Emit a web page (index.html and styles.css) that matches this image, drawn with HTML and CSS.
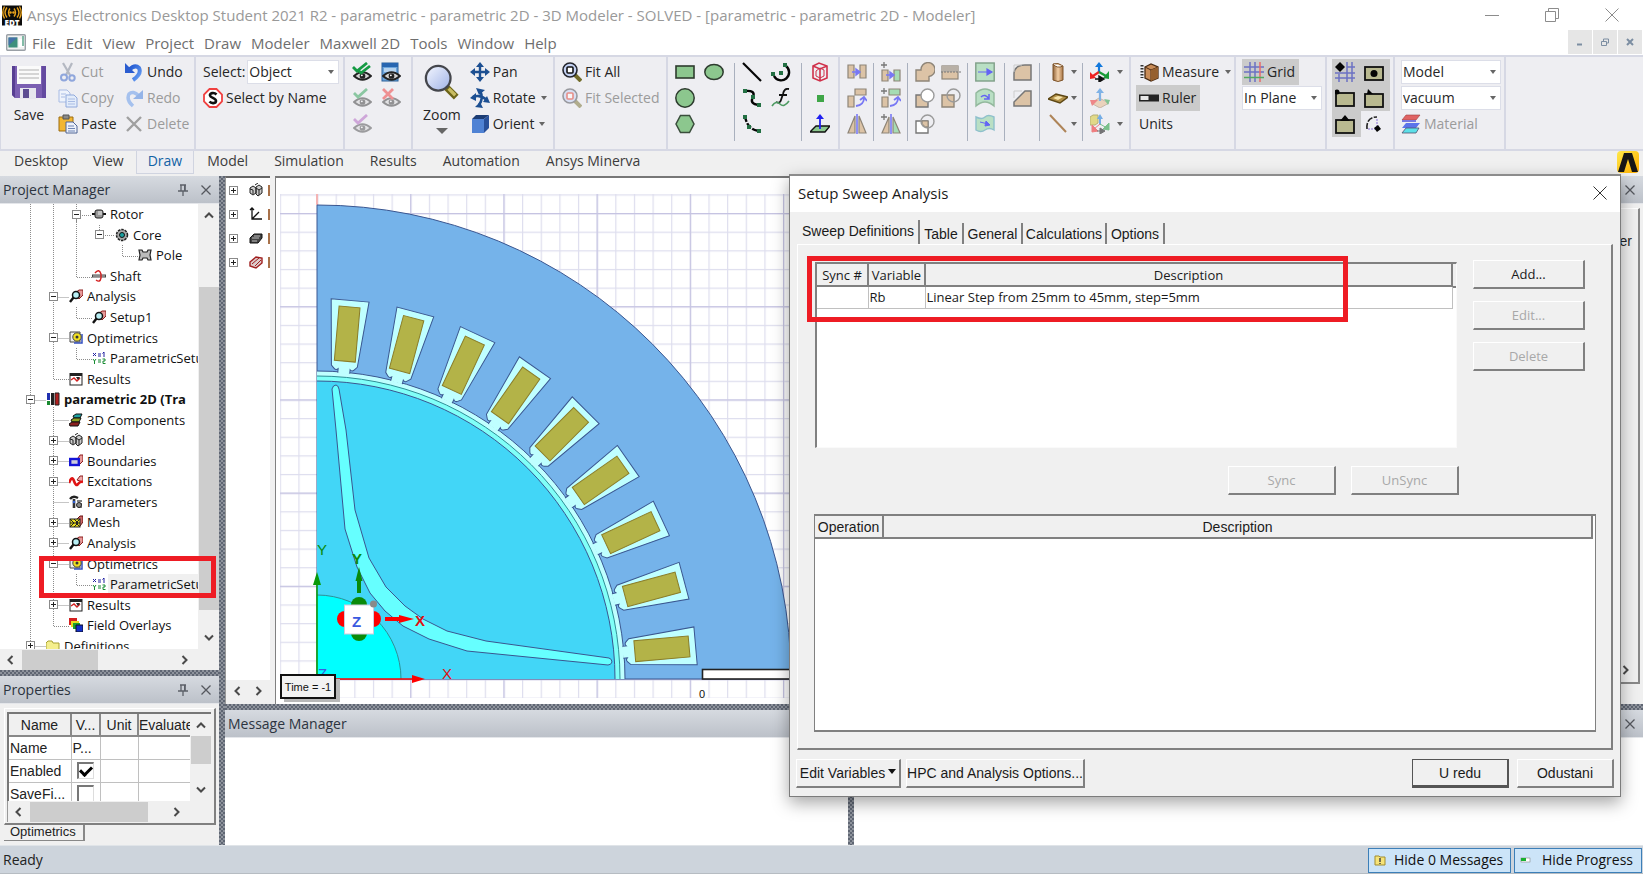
FILE: index.html
```html
<!DOCTYPE html>
<html lang="en">
<head>
<meta charset="utf-8">
<title>Ansys Electronics Desktop Student 2021 R2</title>
<link rel="stylesheet" href="styles.css">
</head>
<body>
<svg class="defs" aria-hidden="true">
  <defs>
    <linearGradient id="lens" x1="0" y1="0" x2="1" y2="1"><stop offset="0" stop-color="#f4f7ff"/><stop offset="1" stop-color="#9fb2e6"/></linearGradient>
    <linearGradient id="blueArrow" x1="0" y1="0" x2="1" y2="1"><stop offset="0" stop-color="#1d55d0"/><stop offset="1" stop-color="#6aa0f4"/></linearGradient>
    <linearGradient id="tube"><stop offset="0" stop-color="#8f6238"/><stop offset=".5" stop-color="#f3cfa6"/><stop offset="1" stop-color="#a87545"/></linearGradient>
    <linearGradient id="gold" x1="0" y1="0" x2="1" y2="1"><stop offset="0" stop-color="#ffe94a"/><stop offset="1" stop-color="#ffae00"/></linearGradient>
    <symbol id="i-app" viewBox="0 0 20 20"><rect width="20" height="20" fill="#0c0c0c"/><g fill="none" stroke="#e8a21c" stroke-width="1.4"><path d="M8 3Q5 7 8 11M5 2Q1 7 5 12M2.500 1Q-1 7 2.500 13M12 3Q15 7 12 11M15 2Q19 7 15 12M17.500 1Q21 7 17.500 13"/></g><circle cx="8.500" cy="7" r="1.300" fill="#e8a21c"/><circle cx="11.500" cy="7" r="1.300" fill="#e8a21c"/><text x="10" y="20" font-family="Open Sans" font-weight="800" font-size="8" text-anchor="middle" fill="#fff">EDT</text></symbol>
    <symbol id="i-doc" viewBox="0 0 20 17"><rect x=".7" y=".7" width="18.600" height="15.600" rx="1" fill="#f2f2f2" stroke="#9aa0a6" stroke-width="1.400"/><rect x="2.500" y="3.500" width="9" height="10" fill="#3f8f7c"/><path d="M2.500 3.500h9l-9 8z" fill="#4571a8"/><path d="M13 5h5v8h-5z" fill="#fff"/><path d="M17 2v10" stroke="#5aa68a" stroke-width="1.500"/></symbol>
    <symbol id="i-save" viewBox="0 0 36 36"><path d="M1 2h34v32H4l-3-3z" fill="#7b5fb2"/><path d="M1 2h3v32l-3-3z" fill="#573e92"/><path d="M31 2h4v32h-4z" fill="#644aa0"/><rect x="6" y="2" width="24" height="18" fill="#fafafa"/><path d="M8 6h20M8 10h20M8 14h20" stroke="#c9c9c9" stroke-width="1.500"/><rect x="9" y="24" width="16" height="11" fill="#e6e6ee"/><rect x="12" y="25" width="6" height="9" fill="#5c4c92"/></symbol>
    <symbol id="i-cut" viewBox="0 0 20 20"><path d="M5 1L12 13M14 1L8 13" stroke="#b4b8c2" stroke-width="2.200"/><circle cx="6" cy="15.500" r="3" fill="none" stroke="#8fa6dc" stroke-width="2"/><circle cx="14" cy="16" r="2.700" fill="none" stroke="#8fa6dc" stroke-width="2"/></symbol>
    <symbol id="i-copy" viewBox="0 0 20 20"><path d="M1 2h8l3 3v9H1z" fill="#eef3fc" stroke="#a9bce4"/><path d="M8 7h8l3 3v9H8z" fill="#e3ecfa" stroke="#90a9dc"/><path d="M10 11h7M10 13.500h7M10 16h7M3 6h5M3 9h4" stroke="#a9bce4"/></symbol>
    <symbol id="i-paste" viewBox="0 0 20 20"><path d="M1 3h14v14H1z" fill="#f2b632" stroke="#9c6d12"/><path d="M5 1h6v4H5z" fill="#8a8a8a" stroke="#555"/><path d="M8 8h7l4 4v7H8z" fill="#edf1fa" stroke="#4f6496"/><path d="M10 12h6M10 14.500h7M10 17h7" stroke="#6d83b4"/></symbol>
    <symbol id="i-undo" viewBox="0 0 20 20"><path d="M5 8Q11 2 15 6Q18 12 9 18" fill="none" stroke="url(#blueArrow)" stroke-width="4"/><path d="M1 1v10h10z" fill="#2a5cd0"/></symbol>
    <symbol id="i-redo" viewBox="0 0 20 20"><path d="M15 8Q9 2 5 6Q2 12 9 18" fill="none" stroke="#a5c1ee" stroke-width="3.500"/><path d="M19 2v9H9z" fill="#94b4e8"/></symbol>
    <symbol id="i-del" viewBox="0 0 20 20"><path d="M3 3L17 17M17 3L3 17" stroke="#a0a0a0" stroke-width="2.400"/></symbol>
    <symbol id="i-sname" viewBox="0 0 20 20"><path d="M6.500 1h7L19 6.500v7L13.500 19h-7L1 13.500v-7z" fill="#fff" stroke="#f04040" stroke-width="1.800"/><path d="M13.500 6.500C11 4 6.500 5 7 7.500C7.500 10 13 10 13 13C13 15.500 8.500 16 6.500 13.500" fill="none" stroke="#111" stroke-width="2.600"/></symbol>
    <symbol id="i-eye" viewBox="0 0 20 10"><path d="M1 5Q10-3 19 5Q10 13 1 5z" fill="#d4d4d4" stroke="#222" stroke-width="1.800"/><circle cx="10" cy="5" r="3" fill="#222"/><circle cx="9.300" cy="4.300" r="1" fill="#fff"/></symbol>
    <symbol id="i-show" viewBox="0 0 20 20"><use href="#i-eye" x="1" y="9" width="19" height="10"/><path d="M1 5l4 4L15 1M6 8l3 3 9-7" fill="none" stroke="#159a43" stroke-width="2.800"/></symbol>
    <symbol id="i-winshow" viewBox="0 0 20 20"><rect x="1" y="1" width="16" height="18" fill="#6ca5dc" stroke="#2b6099"/><rect x="1" y="1" width="16" height="4" fill="#2765b0"/><path d="M3 7h12M3 9h12" stroke="#fff"/><use href="#i-eye" x="1" y="9" width="19" height="10"/></symbol>
    <symbol id="i-show2" viewBox="0 0 20 20"><g opacity=".45"><use href="#i-eye" x="1" y="9" width="19" height="10"/><path d="M2 5l4 4L15 1" fill="none" stroke="#159a43" stroke-width="2.800"/></g></symbol>
    <symbol id="i-hide" viewBox="0 0 20 20"><g opacity=".45"><use href="#i-eye" x="1" y="9" width="19" height="10"/><path d="M2 1l10 10M12 1L2 11" stroke="#f02020" stroke-width="2.800"/></g></symbol>
    <symbol id="i-show3" viewBox="0 0 20 20"><g opacity=".4"><use href="#i-eye" x="1" y="9" width="19" height="10"/><path d="M2 5l4 4L15 1" fill="none" stroke="#a03cb4" stroke-width="2.800"/></g></symbol>
    <symbol id="i-zoom" viewBox="0 0 38 38"><path d="M24 25l10 10" stroke="#6c6418" stroke-width="7"/><path d="M26 26l7 7" stroke="#c9bd62" stroke-width="3.500"/><circle cx="15" cy="15" r="13" fill="url(#lens)" stroke="#44464c" stroke-width="2.400"/></symbol>
    <symbol id="i-pan" viewBox="0 0 20 20"><path d="M10 3v14M3 10h14" stroke="#1c4f92" stroke-width="2.400"/><path d="M10 0l4 5H6zM10 20l4-5H6zM0 10l5-4v8zM20 10l-5-4v8z" fill="#1c4f92"/></symbol>
    <symbol id="i-rot" viewBox="0 0 20 20"><path d="M10 3q4 7-1 14M3 9q7-3 14 3" fill="none" stroke="#1c4f92" stroke-width="2.600"/><path d="M6 0l9 2-6 5zM5 19l8 1-3-6zM0 10l6-5v8zM20 15l-3-7-4 6z" fill="#1c4f92"/></symbol>
    <symbol id="i-cube" viewBox="0 0 20 20"><path d="M2 5h12v14H2z" fill="#4f82d4"/><path d="M2 5l4-4h13l-5 4z" fill="#1c3c74"/><path d="M14 5l5-4v13l-5 5z" fill="#28509a"/></symbol>
    <symbol id="i-fit" viewBox="0 0 20 20"><path d="M13 13l6 6" stroke="#736c2a" stroke-width="4"/><circle cx="8" cy="8" r="7" fill="#c4d2f4" stroke="#23252c" stroke-width="1.600"/><rect x="5" y="5" width="6" height="6" rx="1" fill="#fff" stroke="#111" stroke-width="1.600"/></symbol>
    <symbol id="i-fits" viewBox="0 0 20 20"><g opacity=".5"><path d="M13 13l6 6" stroke="#736c2a" stroke-width="4"/><circle cx="8" cy="8" r="7" fill="#c4d2f4" stroke="#44464c" stroke-width="1.600"/><rect x="5" y="5" width="6" height="6" rx="1" fill="#fff" stroke="#e03020" stroke-width="1.600"/></g></symbol>
    <symbol id="i-rect" viewBox="0 0 20 20"><rect x="1" y="4" width="18" height="12" fill="#8cc78e" stroke="#2d3b2e" stroke-width="1.600"/></symbol>
    <symbol id="i-ell" viewBox="0 0 20 20"><ellipse cx="10" cy="10" rx="9.200" ry="7.500" fill="#8cc78e" stroke="#2d3b2e" stroke-width="1.500"/></symbol>
    <symbol id="i-circ" viewBox="0 0 20 20"><circle cx="10" cy="10" r="9.200" fill="#8cc78e" stroke="#2d3b2e" stroke-width="1.500"/></symbol>
    <symbol id="i-hex" viewBox="0 0 20 20"><path d="M5.500 1.500h9L19 10l-4.500 8.500h-9L1 10z" fill="#8cc78e" stroke="#3a4d3c" stroke-width="1.500"/></symbol>
    <symbol id="i-line" viewBox="0 0 20 20"><path d="M1 1L19 19" stroke="#050505" stroke-width="2.200"/></symbol>
    <symbol id="i-spl" viewBox="0 0 20 20"><path d="M3 3Q14 2 11 9Q7 16 17 17" fill="none" stroke="#050505" stroke-width="2.400"/><path d="M1 1h4v4H1zM9 7h4v4H9zM15 15h4v4h-4z" fill="#237044"/></symbol>
    <symbol id="i-arc3" viewBox="0 0 20 20"><path d="M3 2Q5 16 18 17" fill="none" stroke="#050505" stroke-width="2.400" stroke-dasharray="6 1.500"/><path d="M1 1h4v4H1zM5 11h4v4H5zM15 15h4v4h-4z" fill="#237044"/></symbol>
    <symbol id="i-arc" viewBox="0 0 20 20"><path d="M15 4A8 8 0 1 1 3 14" fill="none" stroke="#050505" stroke-width="2.400"/><path d="M12 1h4v4h-4zM8 9h4v4H8zM0 10h4v4H0z" fill="#237044"/></symbol>
    <symbol id="i-func" viewBox="0 0 20 20"><path d="M18 1Q13 0 12 6L10 12Q9 16 5 14M8 7h8" fill="none" stroke="#111" stroke-width="1.800"/><path d="M1 18q4-6 8-2t9-3" fill="none" stroke="#4d9a62" stroke-width="1.600"/></symbol>
    <symbol id="i-reg" viewBox="0 0 20 20"><g fill="none" stroke="#d0304a" stroke-width="1.600"><path d="M3 4l6-3 8 3v12l-7 3-7-3zM3 4l7 3 7-3M10 7v12"/><path d="M6 9l4-3 4 2v6l-4 2-4-2z" stroke-width="1"/></g></symbol>
    <symbol id="i-pt" viewBox="0 0 20 20"><rect x="7" y="7" width="7" height="7" fill="#3fa648"/></symbol>
    <symbol id="i-plane" viewBox="0 0 20 20"><path d="M6 12h14l-5 6H0z" fill="#8cc78e" stroke="#111" stroke-width="1.400"/><path d="M10 15V4" stroke="#2020f0" stroke-width="1.800"/><path d="M10 0l4 5H6z" fill="#2020f0"/></symbol>
    <symbol id="i-move" viewBox="0 0 20 20"><g fill="#dcc3a6" stroke="#8e8578" stroke-width="1.200"><path d="M1 3h6v13H1zM13 3h6v13h-6z"/></g><path d="M5 10h6M9 7l4 3-4 3z" stroke="#7878f4" stroke-width="1.400" fill="#7878f4"/></symbol>
    <symbol id="i-rota" viewBox="0 0 20 20"><g fill="#dcc3a6" stroke="#8e8578" stroke-width="1.200"><path d="M1 8h6v11H1zM8 1h11v6H8z"/></g><path d="M9 18q8-1 8-8M13 12l4-3 3 4" fill="none" stroke="#7878f4" stroke-width="1.800"/></symbol>
    <symbol id="i-mir" viewBox="0 0 20 20"><g fill="#dcc3a6" stroke="#8e8578" stroke-width="1.200"><path d="M8 2v17H1zM12 2v17h7z"/></g><path d="M10 0v20" stroke="#7878f4" stroke-width="1.600"/></symbol>
    <symbol id="i-dmove" viewBox="0 0 20 20"><path d="M1 8h6v11H1z" fill="#dcc3a6" stroke="#8e8578" stroke-width="1.200"/><path d="M13 8h6v11h-6z" fill="#a6dcb4" stroke="#8e8578" stroke-width="1.200"/><path d="M5 13h6M9 10l4 3-4 3z" stroke="#7878f4" stroke-width="1.400" fill="#7878f4"/><path d="M3 0v6M0 3h6" stroke="#777" stroke-width="1.300"/></symbol>
    <symbol id="i-drota" viewBox="0 0 20 20"><path d="M1 9h6v10H1z" fill="#dcc3a6" stroke="#8e8578" stroke-width="1.200"/><path d="M8 1h11v6H8z" fill="#a6dcb4" stroke="#8e8578" stroke-width="1.200"/><path d="M9 18q8-1 8-8M13 12l4-3 3 4" fill="none" stroke="#7878f4" stroke-width="1.800"/><path d="M3 0v6M0 3h6" stroke="#777" stroke-width="1.300"/></symbol>
    <symbol id="i-dmir" viewBox="0 0 20 20"><path d="M8 3v16H1z" fill="#dcc3a6" stroke="#8e8578" stroke-width="1.200"/><path d="M12 3v16h7z" fill="#a6dcb4" stroke="#8e8578" stroke-width="1.200"/><path d="M10 0v20" stroke="#7878f4" stroke-width="1.600"/><path d="M3 0v6M0 3h6" stroke="#777" stroke-width="1.300"/></symbol>
    <symbol id="i-uni" viewBox="0 0 20 20"><path d="M1 19V8H6A7 7 0 1 1 14 14.500V19z" fill="#dcc3a6" stroke="#8e8578" stroke-width="1.400"/></symbol>
    <symbol id="i-split" viewBox="0 0 20 20"><rect x="1" y="4" width="16" height="13" fill="#dcc3a6" stroke="#8e8578" stroke-width="1.200"/><rect x="1" y="4" width="16" height="6" fill="#b8b0a6"/><path d="M0 10h20" stroke="#777" stroke-dasharray="2 1"/></symbol>
    <symbol id="i-sub" viewBox="0 0 20 20"><path d="M1 7h12v12H1z" fill="#dcc3a6" stroke="#777" stroke-width="1.400"/><circle cx="12.500" cy="7.500" r="6.500" fill="#fff" stroke="#9a9a9a" stroke-width="1.400"/></symbol>
    <symbol id="i-imp" viewBox="0 0 20 20"><path d="M1 7h12v12H1z" fill="#dcc3a6" stroke="#8e8578" stroke-width="1.400"/><circle cx="12.500" cy="7.500" r="6.500" fill="none" stroke="#9a9a9a" stroke-width="1.400"/></symbol>
    <symbol id="i-int" viewBox="0 0 20 20"><path d="M1 7h12v12H1z" fill="#fff" stroke="#777" stroke-width="1.400"/><circle cx="12.500" cy="7.500" r="6.500" fill="none" stroke="#9a9a9a" stroke-width="1.400"/><path d="M7 7h6v6Q7 13 7 7z" fill="#dcc3a6" stroke="#8e8578"/></symbol>
    <symbol id="i-sw1" viewBox="0 0 20 20"><rect x=".8" y="1" width="18.400" height="18" fill="#b9dfc4" stroke="#7f9f88" stroke-width="1.400"/><path d="M3 10h11M12 7l5 3-5 3z" stroke="#6464f4" fill="#6464f4" stroke-width="1.200"/></symbol>
    <symbol id="i-sw2" viewBox="0 0 20 20"><path d="M1 5Q10-3 19 5V18Q10 10 1 18z" fill="#b9dfc4" stroke="#93b89d" stroke-width="1.400"/><path d="M6 9q4-4 8 2M14 6v5H9" fill="none" stroke="#6464f4" stroke-width="1.500"/></symbol>
    <symbol id="i-sw3" viewBox="0 0 20 20"><path d="M1 3Q7 6 10 3T19 3V16Q14 13 10 16T1 16z" fill="#b9dfc4" stroke="#8fc0cc" stroke-width="1.400"/><path d="M5 8l8 2M11 7l4 4-5 1z" stroke="#6464f4" fill="#6464f4"/></symbol>
    <symbol id="i-fil" viewBox="0 0 20 20"><path d="M1 18V11Q2 3 12 3H18V18z" fill="#dcc3a6" stroke="#777" stroke-width="1.500"/><path d="M1 10V3h8" fill="none" stroke="#ccc"/></symbol>
    <symbol id="i-cham" viewBox="0 0 20 20"><path d="M1 18V14L12 3H18V18z" fill="#dcc3a6" stroke="#777" stroke-width="1.500"/><path d="M1 10V3h8" fill="none" stroke="#ccc"/></symbol>
    <symbol id="i-tube" viewBox="0 0 20 20"><path d="M5 2q5-2 10 2v14q-5 3-10 0z" fill="url(#tube)" stroke="#7d542c"/><path d="M5 2q4 5 10 2" fill="#fff" stroke="#7d542c"/></symbol>
    <symbol id="i-sheet" viewBox="0 0 20 20"><path d="M0 11l8-5 12 3-8 6z" fill="#b18f46" stroke="#5c4614" stroke-width="1.400"/><path d="M5 10l5-2 5 1-5 3z" fill="#f5e3aa"/></symbol>
    <symbol id="i-brline" viewBox="0 0 20 20"><path d="M2 1L18 18" stroke="#ae8458" stroke-width="2"/></symbol>
    <symbol id="i-cs" viewBox="0 0 20 20"><path d="M9 11V4" stroke="#1278dc" stroke-width="2.200"/><path d="M9 0l4 5H5z" fill="#1278dc"/><path d="M9 10L3 14" stroke="#e22" stroke-width="2.200"/><path d="M0 10v7l6-1z" fill="#e22"/><path d="M9 10l7 4" stroke="#1a9c38" stroke-width="2.200"/><path d="M19 9v8l-6-1z" fill="#1a9c38"/><path d="M5 17h5M9 14l5 3-5 3z" fill="#111" stroke="#111" stroke-width="1.400"/></symbol>
    <symbol id="i-cs2" viewBox="0 0 20 20"><g opacity=".5"><path d="M1 15l8-5 10 5-9 5z" fill="#e8b888" stroke="#a08060"/><path d="M10 13V4" stroke="#1278dc" stroke-width="2.200"/><path d="M10 0l4 5H6z" fill="#1278dc"/><path d="M0 12l8 0-6 6z" fill="#e22"/><path d="M20 12l-6-1 4 6z" fill="#1a9c38"/></g></symbol>
    <symbol id="i-cs3" viewBox="0 0 20 20"><g opacity=".55"><path d="M0 3l3-2h5v8l-3 2H0z" fill="#d8c832" stroke="#887c10"/><path d="M10 11V4" stroke="#1278dc" stroke-width="2"/><path d="M10 0l3 5H7z" fill="#1278dc"/><path d="M10 10L4 15M2 11v7l6-1z" fill="#e22" stroke="#e22"/><path d="M10 10l7 4M19 9v7l-6-1z" fill="#1a9c38" stroke="#1a9c38"/><path d="M7 17h5M10 14l5 3-5 3z" fill="#111" stroke="#111"/></g></symbol>
    <symbol id="i-meas" viewBox="0 0 20 20"><path d="M6 5l6-3 7 3v11l-7 3-6-3z" fill="#c98c58" stroke="#4a2c14" stroke-width="1.300"/><path d="M6 5l6 3 7-3M12 8v11" stroke="#4a2c14" fill="none"/><path d="M12 8l7-3v11l-7 3z" fill="#96602f"/><path d="M3 3v13" stroke="#333" stroke-width="3" stroke-dasharray="1.500 1.500"/></symbol>
    <symbol id="i-ruler" viewBox="0 0 20 20"><rect x="0" y="6.500" width="20" height="7" fill="#222"/><rect x="1.500" y="8" width="8" height="4" fill="#e8e8e8"/></symbol>
    <symbol id="i-grid" viewBox="0 0 20 20"><path d="M6 0v20M11 0v20M0 5h20M0 10h20" stroke="#6c72c4" stroke-width="1.500"/><path d="M16 0v20" stroke="#e86a6a" stroke-width="1.500"/><path d="M0 15.500h20" stroke="#52a860" stroke-width="1.500"/></symbol>
    <symbol id="i-sgrid" viewBox="0 0 20 20"><path d="M4 12v8M12 0v20M17 0v20M12 5h8M0 11h20M0 16h20" stroke="#6c72c4" stroke-width="1.500"/><path d="M5 0l5 5-5 5-5-5z" fill="#050505"/></symbol>
    <symbol id="i-scen" viewBox="0 0 20 20"><rect x="1" y="5" width="18" height="13" fill="#b9b990" stroke="#111" stroke-width="1.800"/><circle cx="10" cy="11.500" r="3.500" fill="#050505"/></symbol>
    <symbol id="i-sver" viewBox="0 0 20 20"><rect x="1" y="5" width="18" height="13" fill="#b9b990" stroke="#111" stroke-width="1.800"/><circle cx="2" cy="4" r="2.500" fill="#050505"/></symbol>
    <symbol id="i-sedg" viewBox="0 0 20 20"><rect x="1" y="6" width="18" height="13" fill="#b9b990" stroke="#111" stroke-width="1.800"/><path d="M4 1l5 5H3z" fill="#050505"/></symbol>
    <symbol id="i-smid" viewBox="0 0 20 20"><rect x="1" y="6" width="18" height="13" fill="#b9b990" stroke="#111" stroke-width="1.800"/><path d="M10 1l5 6H5z" fill="#050505"/></symbol>
    <symbol id="i-sarc" viewBox="0 0 20 20"><path d="M3 15Q2 3 13 3" fill="none" stroke="#222" stroke-width="1.600" stroke-dasharray="6 1.500"/><path d="M4 15h8M13 5v8" stroke="#8a70d8" stroke-dasharray="2 1"/><path d="M10 14l4-3 3 4-4 3z" fill="#050505"/></symbol>
    <symbol id="i-mat" viewBox="0 0 20 20"><path d="M5 1h14l-4 5H1z" fill="#e06464" stroke="#a04040" stroke-width=".6"/><path d="M1 6h14v2H1z" fill="#7878e0"/><path d="M5 9h14l-4 5H1z" fill="#5c74ea"/><path d="M5 14h13l-3 5H1z" fill="#5ce0e8" stroke="#505070" stroke-width=".8"/></symbol>
    <symbol id="i-logo" viewBox="0 0 22 22"><rect width="22" height="22" rx="4" fill="url(#gold)"/><path d="M1 21L7 2h8l6 19h-6L11 8 7 21z" fill="#161616"/></symbol>
    <symbol id="i-pin" viewBox="0 0 12 12"><path d="M3 1h6M4 1v6M8 1v6M1 7h10M6 7v5" fill="none" stroke="#5c6068" stroke-width="1.300"/><path d="M7 1h1.500v6H7z" fill="#5c6068"/></symbol>
    <symbol id="i-x" viewBox="0 0 12 12"><path d="M1.500 1.500l9 9M10.500 1.500l-9 9" stroke="#55585e" stroke-width="1.300"/></symbol>
    <symbol id="i-l" viewBox="0 0 12 12"><path d="M8.500 2L4.500 6l4 4" fill="none" stroke="#4a4a4a" stroke-width="2"/></symbol>
    <symbol id="i-r" viewBox="0 0 12 12"><path d="M3.500 2l4 4-4 4" fill="none" stroke="#4a4a4a" stroke-width="2"/></symbol>
    <symbol id="i-u" viewBox="0 0 12 12"><path d="M2 8.500l4-4 4 4" fill="none" stroke="#4a4a4a" stroke-width="2"/></symbol>
    <symbol id="i-d" viewBox="0 0 12 12"><path d="M2 3.500l4 4 4-4" fill="none" stroke="#4a4a4a" stroke-width="2"/></symbol>
    <symbol id="t-rotor" viewBox="0 0 14 14"><path d="M0 7h14" stroke="#111" stroke-width="2"/><rect x="3" y="3" width="8" height="8" rx="2" fill="#999" stroke="#222"/><path d="M6 5h4M6 7h4" stroke="#eee"/></symbol>
    <symbol id="t-core" viewBox="0 0 14 14"><circle cx="7" cy="7" r="5.500" fill="#aaa" stroke="#222" stroke-width="1.500" stroke-dasharray="2.500 1"/><circle cx="7" cy="7" r="2.500" fill="#1aa0a0" stroke="#111"/></symbol>
    <symbol id="t-pole" viewBox="0 0 14 14"><path d="M1 2h3l1 2h4l1-2h3l-1 5 1 5h-3l-1-2H5l-1 2H1l1-5z" fill="#bbb" stroke="#222" stroke-width="1.200"/></symbol>
    <symbol id="t-shaft" viewBox="0 0 14 14"><path d="M0 7h14" stroke="#444" stroke-width="3"/><path d="M1 7h12" stroke="#ccc"/><path d="M3 4q4-5 6 1v4q-1 5-5 2" fill="none" stroke="#d42020" stroke-width="1.400"/></symbol>
    <symbol id="t-ana" viewBox="0 0 14 14"><path d="M6 4l4-3 4 0v5l-4 4z" fill="#e89a9a" stroke="#8a1c1c"/><circle cx="7" cy="6" r="3.500" fill="#b8eef4" stroke="#111" stroke-width="1.500"/><path d="M4.500 8.500L1 13" stroke="#111" stroke-width="2.400"/></symbol>
    <symbol id="t-opt" viewBox="0 0 14 14"><path d="M1 1h10v10H1z" fill="#eee" stroke="#444"/><path d="M5 12h8V3" fill="none" stroke="#3450c0" stroke-width="1.500"/><circle cx="8" cy="6" r="4.200" fill="#f2e020" stroke="#444"/><circle cx="8" cy="6" r="1.500" fill="#333"/></symbol>
    <symbol id="t-par" viewBox="0 0 14 14"><path d="M1 2l3 3M4 2L1 5M6 3h3M6 5h3M12 1v5M10.500 2.500L12 1" stroke="#2020a0" fill="none"/><path d="M1 8l1.500 2L4 8M2.500 10v3M6 9h3M6 11h3M10.500 8H13v2h-2v2.500h2.500" stroke="#158a30" fill="none"/></symbol>
    <symbol id="t-res" viewBox="0 0 14 14"><rect x="1" y="1.500" width="12" height="11.500" fill="#fff" stroke="#222"/><path d="M1 3h12" stroke="#222" stroke-width="2"/><path d="M2 8l3-2 3 3 3-3" fill="none" stroke="#d42020" stroke-width="1.400"/><path d="M7 5h4l-2 3z" fill="#222"/></symbol>
    <symbol id="t-des" viewBox="0 0 14 14"><path d="M1 1h3v7H1z" fill="#2030b0"/><path d="M1 9h3v4H1z" fill="#1a8a30"/><path d="M5 1h3v12H5z" fill="#222"/><path d="M9 1h4v12H9z" fill="#b02020" stroke="#222"/></symbol>
    <symbol id="t-3dc" viewBox="0 0 14 14"><path d="M4 3l3-2h6l-2 4H5z" fill="#20a0a0" stroke="#111"/><path d="M2 7l3-2h7l-2 4H3z" fill="#8ca020" stroke="#111"/><path d="M0 11l3-2h8l-2 4H1z" fill="#8a2020" stroke="#111"/></symbol>
    <symbol id="t-mod" viewBox="0 0 14 14"><path d="M1 5l3-2 3 2v5l-3 2-3-2zM7 4l3-2 3 2v6l-4 3-2-2zM6 2l3-2" fill="#ccc" stroke="#222"/><path d="M7 5l3 2 3-2M10 7v5M1 6l3 1v4" fill="none" stroke="#222"/></symbol>
    <symbol id="t-bou" viewBox="0 0 14 14"><path d="M9 4l2-3h3v6l-4 4z" fill="#e89a9a" stroke="#8a1c1c"/><rect x="1.200" y="5" width="8.600" height="6" fill="#ccd" stroke="#1414d8" stroke-width="2.400"/></symbol>
    <symbol id="t-exc" viewBox="0 0 14 14"><path d="M8 6l3-4h3v6z" fill="#eaa" stroke="#8a1c1c"/><path d="M0 9q3-8 5-2t4 3 5-2" fill="none" stroke="#e01414" stroke-width="2.600"/></symbol>
    <symbol id="t-prm" viewBox="0 0 14 14"><path d="M1 4q3-4 8-1" fill="none" stroke="#222" stroke-width="2.400"/><path d="M5 4v9" stroke="#333" stroke-width="2.600"/><path d="M8 6h5M8 9h5M9 12h4" stroke="#555" stroke-width="1.500"/><circle cx="5" cy="7" r="1.300" fill="#3060d0"/><circle cx="10" cy="10" r="2.500" fill="#888" stroke="#222"/></symbol>
    <symbol id="t-mesh" viewBox="0 0 14 14"><path d="M8 4l3-3h3v6l-3 4z" fill="#c66" stroke="#611"/><rect x="1" y="4" width="10" height="8" fill="#e8dc20" stroke="#222"/><path d="M1 4l4 4-4 4M5 4l4 4-4 4M11 4L7 8l4 4M1 8h10" stroke="#222" fill="none"/></symbol>
    <symbol id="t-fld" viewBox="0 0 14 14"><path d="M0 0h8v7H0z" fill="#d42020"/><path d="M2 3h8v6H2z" fill="#e8dc20"/><path d="M4 5h7v6H4z" fill="#1aa030"/><path d="M7 7h7v7H7z" fill="#1430c8" stroke="#112"/></symbol>
    <symbol id="t-dir" viewBox="0 0 14 14"><path d="M0 4l2-2h4l1 2h6v9H0z" fill="#f4ee8c" stroke="#a8a030"/></symbol>
    <symbol id="t-axes" viewBox="0 0 14 14"><path d="M3 1v11h10M3 12l7-7M1 3l2-2 2 2" fill="none" stroke="#111" stroke-width="1.300"/></symbol>
    <symbol id="t-pl" viewBox="0 0 14 14"><path d="M1 7l4-4h8v4l-4 5H1z" fill="#444" stroke="#111"/><path d="M3 7h7M5 5h6M3 10h5" stroke="#bbb"/></symbol>
    <symbol id="t-list" viewBox="0 0 14 14"><path d="M1 7l6-5 6 1v5l-6 5-6-2z" fill="#dcc" stroke="#a02020" stroke-width="1.400"/><path d="M3 9l7-6M6 11l6-6" stroke="#a02020"/></symbol>
    <symbol id="plus" viewBox="0 0 9 9"><rect x=".5" y=".5" width="8" height="8" fill="#fff" stroke="#8a8a8a"/><path d="M2 4.500h5M4.500 2v5" stroke="#222"/></symbol>
    <symbol id="minus" viewBox="0 0 9 9"><rect x=".5" y=".5" width="8" height="8" fill="#fff" stroke="#8a8a8a"/><path d="M2 4.500h5" stroke="#222"/></symbol>
  </defs>
</svg>

<header class="titlebar">
  <svg class="ic20"><use href="#i-app"/></svg>
  <h1>Ansys Electronics Desktop Student 2021 R2 - parametric - parametric 2D - 3D Modeler - SOLVED - [parametric - parametric 2D - Modeler]</h1>
  <div class="winctl">
    <button aria-label="Minimize"><svg viewBox="0 0 14 14"><path d="M0 7.500h14"/></svg></button>
    <button aria-label="Restore"><svg viewBox="0 0 14 14"><path d="M.5 3.500h10v10H.5zM3.500 3.500v-3h10v10h-3"/></svg></button>
    <button aria-label="Close"><svg viewBox="0 0 14 14"><path d="M.5.5l13 13M13.500.5l-13 13"/></svg></button>
  </div>
</header>

<nav class="menubar">
  <svg class="docic"><use href="#i-doc"/></svg>
  <button>File</button><button>Edit</button><button>View</button><button>Project</button><button>Draw</button><button>Modeler</button><button>Maxwell 2D</button><button>Tools</button><button>Window</button><button>Help</button>
  <div class="mdi">
    <button aria-label="Minimize document"><svg viewBox="0 0 8 8"><path d="M1 6.500h5"/></svg></button>
    <button aria-label="Restore document"><svg viewBox="0 0 8 8"><path d="M.5 3.500h5v4h-5zM2.500 3V1h5v4H6" stroke-width="1"/></svg></button>
    <button aria-label="Close document"><svg viewBox="0 0 8 8"><path d="M1 1l6 6M7 1L1 7"/></svg></button>
  </div>
</nav>

<section class="ribbon">
  <div class="grp g-clip">
    <button class="big"><svg class="ic36"><use href="#i-save"/></svg><span>Save</span></button>
    <div class="col c-cut">
      <button disabled><svg><use href="#i-cut"/></svg>Cut</button>
      <button disabled><svg><use href="#i-copy"/></svg>Copy</button>
      <button><svg><use href="#i-paste"/></svg>Paste</button>
    </div>
    <div class="col">
      <button><svg><use href="#i-undo"/></svg>Undo</button>
      <button disabled><svg><use href="#i-redo"/></svg>Redo</button>
      <button disabled><svg><use href="#i-del"/></svg>Delete</button>
    </div>
  </div>
  <div class="grp g-sel">
    <div class="col">
      <div class="line"><label for="selmode">Select:</label><span class="dd w92"><select id="selmode"><option>Object</option></select></span></div>
      <button><svg><use href="#i-sname"/></svg>Select by Name</button>
    </div>
  </div>
  <div class="grp g-eye">
    <div class="icons two">
      <button aria-label="Show selected"><svg><use href="#i-show"/></svg></button><button aria-label="Visibility window"><svg><use href="#i-winshow"/></svg></button>
      <button aria-label="Show in view"><svg><use href="#i-show2"/></svg></button><button aria-label="Hide"><svg><use href="#i-hide"/></svg></button>
      <button aria-label="Show only"><svg><use href="#i-show3"/></svg></button>
    </div>
  </div>
  <div class="grp g-zoom">
    <button class="big"><svg class="ic36"><use href="#i-zoom"/></svg><span>Zoom</span><i class="tri lg"></i></button>
    <div class="col">
      <button><svg><use href="#i-pan"/></svg>Pan</button>
      <button><svg><use href="#i-rot"/></svg>Rotate<i class="tri"></i></button>
      <button><svg><use href="#i-cube"/></svg>Orient<i class="tri"></i></button>
    </div>
  </div>
  <div class="grp g-fit">
    <div class="col">
      <button><svg><use href="#i-fit"/></svg>Fit All</button>
      <button disabled><svg><use href="#i-fits"/></svg>Fit Selected</button>
    </div>
  </div>
  <div class="grp nest">
    <div class="sub s67"><div class="icons two">
      <button aria-label="Rectangle"><svg><use href="#i-rect"/></svg></button><button aria-label="Ellipse"><svg><use href="#i-ell"/></svg></button>
      <button aria-label="Circle"><svg><use href="#i-circ"/></svg></button><span></span>
      <button aria-label="Polygon"><svg><use href="#i-hex"/></svg></button>
    </div></div>
    <div class="sub s67"><div class="icons two">
      <button aria-label="Line"><svg><use href="#i-line"/></svg></button><button aria-label="Centre arc"><svg><use href="#i-arc"/></svg></button>
      <button aria-label="Spline"><svg><use href="#i-spl"/></svg></button><button aria-label="Equation curve"><svg><use href="#i-func"/></svg></button>
      <button aria-label="Three point arc"><svg><use href="#i-arc3"/></svg></button>
    </div></div>
    <div class="sub s38"><div class="icons">
      <button aria-label="Region"><svg><use href="#i-reg"/></svg></button>
      <button aria-label="Point"><svg><use href="#i-pt"/></svg></button>
      <button aria-label="Plane"><svg><use href="#i-plane"/></svg></button>
    </div></div>
  </div>
  <div class="grp nest">
    <div class="sub s34"><div class="icons">
      <button aria-label="Move"><svg><use href="#i-move"/></svg></button><button aria-label="Rotate object"><svg><use href="#i-rota"/></svg></button><button aria-label="Mirror"><svg><use href="#i-mir"/></svg></button>
    </div></div>
    <div class="sub s34"><div class="icons">
      <button aria-label="Duplicate along line"><svg><use href="#i-dmove"/></svg></button><button aria-label="Duplicate around axis"><svg><use href="#i-drota"/></svg></button><button aria-label="Duplicate mirror"><svg><use href="#i-dmir"/></svg></button>
    </div></div>
    <div class="sub s60"><div class="icons two tight">
      <button aria-label="Unite"><svg><use href="#i-uni"/></svg></button><button aria-label="Split"><svg><use href="#i-split"/></svg></button>
      <button aria-label="Subtract"><svg><use href="#i-sub"/></svg></button><button aria-label="Imprint"><svg><use href="#i-imp"/></svg></button>
      <button aria-label="Intersect"><svg><use href="#i-int"/></svg></button>
    </div></div>
    <div class="sub s37"><div class="icons">
      <button aria-label="Sweep along vector"><svg><use href="#i-sw1"/></svg></button><button aria-label="Sweep around axis"><svg><use href="#i-sw2"/></svg></button><button aria-label="Sweep along path"><svg><use href="#i-sw3"/></svg></button>
    </div></div>
    <div class="sub s35"><div class="icons">
      <button aria-label="Fillet"><svg><use href="#i-fil"/></svg></button><button aria-label="Chamfer"><svg><use href="#i-cham"/></svg></button>
    </div></div>
    <div class="sub s43"><div class="icons">
      <button aria-label="Surface"><svg><use href="#i-tube"/></svg><i class="tri"></i></button><button aria-label="Sheet"><svg><use href="#i-sheet"/></svg><i class="tri"></i></button><button aria-label="Edge"><svg><use href="#i-brline"/></svg><i class="tri"></i></button>
    </div></div>
    <div class="sub s48"><div class="icons cs">
      <button aria-label="Relative coordinate system"><svg><use href="#i-cs"/></svg><i class="tri"></i></button><button aria-label="Face coordinate system"><svg><use href="#i-cs2"/></svg></button><button aria-label="Object coordinate system"><svg><use href="#i-cs3"/></svg><i class="tri"></i></button>
    </div></div>
  </div>
  <div class="grp g-meas">
    <div class="col">
      <button class="pad"><svg><use href="#i-meas"/></svg>Measure<i class="tri"></i></button>
      <button class="pad on"><svg><use href="#i-ruler"/></svg>Ruler</button>
      <button class="pad">Units</button>
    </div>
  </div>
  <div class="grp g-grid">
    <div class="col">
      <button class="on"><svg><use href="#i-grid"/></svg>Grid</button>
      <span class="dd w80"><select aria-label="Movement mode"><option>In Plane</option></select></span>
    </div>
  </div>
  <div class="grp g-snap">
    <div class="snaps">
      <button class="on" aria-label="Snap grid"><svg><use href="#i-sgrid"/></svg></button><button class="on" aria-label="Snap face centre"><svg><use href="#i-scen"/></svg></button>
      <button class="on" aria-label="Snap vertex"><svg><use href="#i-sver"/></svg></button><button class="on" aria-label="Snap edge"><svg><use href="#i-sedg"/></svg></button>
      <button class="on" aria-label="Snap edge centre"><svg><use href="#i-smid"/></svg></button><button aria-label="Snap arc centre"><svg><use href="#i-sarc"/></svg></button>
    </div>
  </div>
  <div class="grp g-mat">
    <div class="col">
      <span class="dd w100"><select aria-label="Model type"><option>Model</option></select></span>
      <span class="dd w100"><select aria-label="Default material"><option>vacuum</option></select></span>
      <button disabled><svg><use href="#i-mat"/></svg>Material</button>
    </div>
  </div>
</section>

<nav class="tabs">
  <button class="near">Desktop</button><button class="near">View</button><button class="active">Draw</button><button>Model</button><button>Simulation</button><button>Results</button><button>Automation</button><button>Ansys Minerva</button>
  <svg class="logo"><use href="#i-logo"/></svg>
</nav>

<main class="work">
  <aside class="left">
    <header class="phead"><h2>Project Manager</h2><svg><use href="#i-pin"/></svg><svg><use href="#i-x"/></svg></header>
    <div class="treebox">
      <div class="treeview">
        <svg class="guides" width="197" height="445" viewBox="0 204 197 445"><path d="M30.500 204V649M53.500 204V379.500H69M53.500 407V626.500H69M76.500 204V277.500H92M76.500 222V215.500H92M99.500 225V235.500H115M122.500 245V256.500H138M53.500 297.500H69M76.500 307V318.500H92M53.500 338.500H69M76.500 348V359.500H92M30.500 400.500H46M53.500 420.500H69M53.500 441.500H69M53.500 461.500H69M53.500 482.500H69M53.500 502.500H69M53.500 523.500H69M53.500 543.500H69M53.500 564.500H69M76.500 574V585.500H92M53.500 605.500H69M30.500 646.500H46"/></svg>
        <ul class="tree">
          <li class="l2"><i><svg><use href="#minus"/></svg></i><svg><use href="#t-rotor"/></svg>Rotor</li>
          <li class="l3"><i><svg><use href="#minus"/></svg></i><svg><use href="#t-core"/></svg>Core</li>
          <li class="l4"><i></i><svg><use href="#t-pole"/></svg>Pole</li>
          <li class="l2"><i></i><svg><use href="#t-shaft"/></svg>Shaft</li>
          <li class="l1"><i><svg><use href="#minus"/></svg></i><svg><use href="#t-ana"/></svg>Analysis</li>
          <li class="l2"><i></i><svg><use href="#t-ana"/></svg>Setup1</li>
          <li class="l1"><i><svg><use href="#minus"/></svg></i><svg><use href="#t-opt"/></svg>Optimetrics</li>
          <li class="l2"><i></i><svg><use href="#t-par"/></svg>ParametricSetu</li>
          <li class="l1"><i></i><svg><use href="#t-res"/></svg>Results</li>
          <li class="l0"><i><svg><use href="#minus"/></svg></i><svg><use href="#t-des"/></svg><b>parametric 2D (Tra</b></li>
          <li class="l1"><i></i><svg><use href="#t-3dc"/></svg>3D Components</li>
          <li class="l1"><i><svg><use href="#plus"/></svg></i><svg><use href="#t-mod"/></svg>Model</li>
          <li class="l1"><i><svg><use href="#plus"/></svg></i><svg><use href="#t-bou"/></svg>Boundaries</li>
          <li class="l1"><i><svg><use href="#plus"/></svg></i><svg><use href="#t-exc"/></svg>Excitations</li>
          <li class="l1"><i></i><svg><use href="#t-prm"/></svg>Parameters</li>
          <li class="l1"><i><svg><use href="#plus"/></svg></i><svg><use href="#t-mesh"/></svg>Mesh</li>
          <li class="l1"><i><svg><use href="#plus"/></svg></i><svg><use href="#t-ana"/></svg>Analysis</li>
          <li class="l1"><i><svg><use href="#minus"/></svg></i><svg><use href="#t-opt"/></svg>Optimetrics</li>
          <li class="l2"><i></i><svg><use href="#t-par"/></svg><span class="cur">ParametricSetu</span></li>
          <li class="l1"><i><svg><use href="#plus"/></svg></i><svg><use href="#t-res"/></svg>Results</li>
          <li class="l1"><i></i><svg><use href="#t-fld"/></svg>Field Overlays</li>
          <li class="l0"><i><svg><use href="#plus"/></svg></i><svg><use href="#t-dir"/></svg>Definitions</li>
        </ul>
      </div>
      <div class="vbar"><svg><use href="#i-u"/></svg><div class="thumb"></div><svg><use href="#i-d"/></svg></div>
      <div class="mark mark-tree"></div>
    </div>
    <div class="hbar"><svg><use href="#i-l"/></svg><div class="thumb"></div><svg><use href="#i-r"/></svg></div>
    <div class="split"></div>
    <header class="phead"><h2>Properties</h2><svg><use href="#i-pin"/></svg><svg><use href="#i-x"/></svg></header>
    <div class="props">
      <div class="propframe">
        <div class="proprow">
          <div class="propclip">
            <table class="ptable">
              <thead><tr><th class="p1">Name</th><th class="p2">V...</th><th class="p3">Unit</th><th class="p4">Evaluated</th></tr></thead>
              <tbody>
                <tr><td>Name</td><td>P...</td><td></td><td></td></tr>
                <tr><td><label for="en">Enabled</label></td><td class="ck"><input id="en" type="checkbox" checked></td><td></td><td></td></tr>
                <tr><td><label for="sv">SaveFi...</label></td><td class="ck"><input id="sv" type="checkbox"></td><td></td><td></td></tr>
              </tbody>
            </table>
          </div>
          <div class="vbar"><svg><use href="#i-u"/></svg><div class="thumb"></div><svg><use href="#i-d"/></svg></div>
        </div>
        <div class="hbar"><svg><use href="#i-l"/></svg><div class="thumb"></div><svg><use href="#i-r"/></svg></div>
      </div>
      <button class="ptab">Optimetrics</button>
    </div>
  </aside>
  <div class="split v"></div>
  <div class="right">
    <div class="upper">
      <div class="mtree">
        <ul>
          <li><svg class="pm"><use href="#plus"/></svg><svg><use href="#t-mod"/></svg><span></span></li>
          <li><svg class="pm"><use href="#plus"/></svg><svg><use href="#t-axes"/></svg><span></span></li>
          <li><svg class="pm"><use href="#plus"/></svg><svg><use href="#t-pl"/></svg><span></span></li>
          <li><svg class="pm"><use href="#plus"/></svg><svg><use href="#t-list"/></svg><span></span></li>
        </ul>
        <div class="mscroll"><svg><use href="#i-l"/></svg><svg><use href="#i-r"/></svg></div>
      </div>
      <div class="canvas">
        <svg class="model" role="img" aria-label="Motor cross-section">
          <defs>
            <pattern id="minor" width="18.640" height="18.640" patternUnits="userSpaceOnUse"><path d="M0 0H18.640M0 0V18.640" fill="none" stroke="#dedeee" stroke-width="2.400"/></pattern>
            <pattern id="major" width="93.200" height="93.200" patternUnits="userSpaceOnUse"><path d="M0 0H93.200M0 0V93.200" fill="none" stroke="#c6c4e2" stroke-width="2.400"/></pattern>
            <g id="slot"><path d="M-6-307V-311Q-8-309-10-311L-13-314L-19-380H19L13-314L10-311Q8-309 6-311V-307" fill="#bfffff" stroke="#3a5690"/><rect x="-10.500" y="-373.500" width="21" height="54.500" fill="#b3b348" stroke="#8a7c28"/></g>
            <clipPath id="quad"><rect x="0" y="-480" width="480" height="480"/></clipPath>
          </defs>
          <g transform="translate(41 501)">
            <rect x="-37" y="-485" width="1200" height="504" fill="url(#minor)"/>
            <rect x="-37" y="-485" width="1200" height="504" fill="url(#major)"/>
            <path d="M0-485V-474" stroke="#f4b4b4" stroke-width="2"/>
            <path d="M0 0V-474A474 474 0 0 1 474 0z" fill="#75b3ea" stroke="#3a5690"/>
            <g clip-path="url(#quad)">
              <circle r="308" fill="#bfffff" stroke="#3a5690"/>
              <use href="#slot" transform="rotate(5)"/><use href="#slot" transform="rotate(15)"/><use href="#slot" transform="rotate(25)"/><use href="#slot" transform="rotate(35)"/><use href="#slot" transform="rotate(45)"/><use href="#slot" transform="rotate(55)"/><use href="#slot" transform="rotate(65)"/><use href="#slot" transform="rotate(75)"/><use href="#slot" transform="rotate(85)"/>
              <circle r="303" fill="#80fff8" stroke="#2f8f96"/>
              <circle r="298" fill="#42d6f7" stroke="#3a5690"/>
              <path d="M15-290Q16-294 19-294Q21-294 22-290L29-249L38-169L52-121L69-92L88-73L106-60L130-48L169-38L292-21Q295-20 295-17Q294-14 291-14L150-28L112-40L86-53L68-68L53-86L40-112L28-150L19-249z" fill="#66ffff" stroke="#3a5690"/>
              <circle r="84" fill="#00ffff" stroke="#2f8f96"/>
            </g>
            <path d="M0 0V-96" stroke="#0a9a0a" stroke-width="1.600"/><path d="M0-107l-4 13h8z" fill="#0a9a0a"/>
            <path d="M0 0H96" stroke="#f00" stroke-width="1.600"/><path d="M108 0L95-4v8z" fill="#f00"/>
            <path d="M42-86V-100" stroke="#0a8a0a" stroke-width="4"/><path d="M42-112l-3.500 14h7z" fill="#0a8a0a"/>
            <circle cx="42" cy="-74" r="8" fill="#0a8a0a"/><circle cx="42" cy="-46" r="8" fill="#0a8a0a"/>
            <circle cx="28" cy="-60" r="8" fill="#f00"/><circle cx="56" cy="-60" r="8" fill="#f00"/>
            <path d="M68-60H86" stroke="#f00" stroke-width="4"/><path d="M97-60L82-64v8z" fill="#f00"/>
            <rect x="27.500" y="-74" width="29" height="29" fill="#fff" stroke="#ccd"/>
            <circle cx="56.500" cy="-75" r="3.500" fill="#8a8a8a"/>
            <g font-family="Liberation Sans, sans-serif" font-size="15">
              <text x="0" y="-124" fill="#0a8a0a">Y</text><text x="35" y="-115" fill="#0a8a0a" font-weight="bold">Y</text>
              <text x="125" y="0" fill="#e01010">X</text><text x="98" y="-53" fill="#e01010" font-weight="bold">X</text>
              <text x="35" y="-52" fill="#3a5ae0" font-weight="bold">Z</text><text x="1" y="0" fill="#3a5ae0">Z</text>
              <text x="382" y="19" font-size="11" fill="#111">0</text>
            </g>
            <rect x="385.500" y="-9.500" width="240" height="9.500" fill="#fff" stroke="#222" stroke-width="1.600"/>
            <rect x="-33" y="0" width="56" height="23" fill="#b8b8b8"/>
            <rect x="-36" y="-4" width="54" height="23" fill="#f2f2f2" stroke="#111" stroke-width="2"/>
            <text x="-9" y="12" text-anchor="middle" font-family="Liberation Sans, sans-serif" font-size="11" fill="#111">Time = -1</text>
          </g>
        </svg>
      </div>
      <div class="rpanel">
        <header class="phead"><h2></h2><svg><use href="#i-x"/></svg></header>
        <div class="rbody"><div class="rframe"><span>er</span><svg><use href="#i-r"/></svg></div></div>
      </div>
    </div>
    <div class="split"></div>
    <div class="lower">
      <section class="msg"><header class="phead"><h2>Message Manager</h2></header></section>
      <div class="split v"></div>
      <section class="prog"><header class="phead"><h2></h2><svg><use href="#i-x"/></svg></header></section>
    </div>
  </div>
</main>

<footer class="status">
  <span>Ready</span>
  <button><svg viewBox="0 0 12 12"><path d="M1 2h4l1 1h5v8H1z" fill="#f6e478" stroke="#a08c30"/><path d="M6 4v4M6 9v1" stroke="#444" stroke-width="1.500"/></svg>Hide 0 Messages</button>
  <button><svg viewBox="0 0 12 12"><rect x="1" y="4" width="9" height="4" fill="#fff" stroke="#888" stroke-width=".6"/><rect x="1" y="4" width="5" height="3" fill="#18b030"/></svg>Hide Progress</button>
</footer>

<div class="dialog" role="dialog" aria-labelledby="dt">
  <header><h2 id="dt">Setup Sweep Analysis</h2><button aria-label="Close dialog"><svg viewBox="0 0 14 14"><path d="M.5.5l13 13M13.500.5l-13 13"/></svg></button></header>
  <div class="dtabs"><button class="act">Sweep Definitions</button><button class="t2">Table</button><button class="t3">General</button><button class="t4">Calculations</button><button class="t5">Options</button></div>
  <div class="dpanel">
    <div class="drow">
      <div class="grid1">
        <table class="dtable sans">
          <thead><tr><th class="d1">Sync #</th><th class="d2">Variable</th><th>Description</th></tr></thead>
          <tbody><tr><td></td><td>Rb</td><td>Linear Step from 25mm to 45mm, step=5mm</td></tr></tbody>
        </table>
        <div class="mark mark-dlg"></div>
      </div>
      <div class="side"><button class="b3">Add...</button><button class="b3" disabled>Edit...</button><button class="b3" disabled>Delete</button></div>
    </div>
    <div class="syncs"><button class="b3" disabled>Sync</button><button class="b3" disabled>UnSync</button></div>
    <div class="grid2">
      <table class="dtable">
        <thead><tr><th class="d3">Operation</th><th>Description</th></tr></thead>
      </table>
    </div>
  </div>
  <div class="dfoot">
    <button class="b3 ev">Edit Variables<i class="tri"></i></button><button class="b3 hpc">HPC and Analysis Options...</button>
    <button class="b3 ok">U redu</button><button class="b3 no">Odustani</button>
  </div>
</div>
</body>
</html>
```

FILE: styles.css
```css
* { box-sizing: border-box; }
body {
  margin: 0;
  height: 100vh;
  display: flex;
  flex-direction: column;
  overflow: hidden;
  position: relative;
  background: #f0f0f0;
  color: #262626;
  font: 14px/20px "Open Sans", "Noto Sans", sans-serif;
}
button, select, input { font: inherit; color: inherit; margin: 0; padding: 0; border: 0; background: none; border-radius: 0; }
h1, h2, ul { margin: 0; padding: 0; font-weight: normal; }
svg { display: block; flex: none; }
.defs { position: absolute; width: 0; height: 0; }

/* window chrome */
.titlebar { display: flex; align-items: center; height: 30px; flex: none; background: #fff; padding-left: 2px; }
.titlebar h1 { flex: 1; padding-left: 5px; font-size: 15px; line-height: 30px; color: #999; white-space: nowrap; overflow: hidden; }
.ic20 { width: 20px; height: 21px; }
.winctl { display: flex; padding-right: 1px; }
.winctl button { width: 60px; height: 30px; display: flex; align-items: center; justify-content: center; }
.winctl svg { width: 14px; height: 14px; fill: none; stroke: #8c8c8c; }
.menubar { display: flex; align-items: center; height: 25px; flex: none; background: #fff; padding-left: 6px; color: #6e6e6e; font-size: 15px; }
.menubar > button { padding: 0 5px; height: 24px; }
.docic { width: 20px; height: 17px; margin-right: 1px; }
.mdi { margin-left: auto; display: flex; gap: 1px; padding-right: 1px; height: 24px; align-self: flex-start; }
.mdi button { width: 24px; background: #e6e6e6; display: flex; align-items: center; justify-content: center; }
.mdi svg { width: 8px; height: 8px; fill: none; stroke: #7c8ea2; stroke-width: 2; }

/* ribbon */
.ribbon { display: flex; height: 96px; flex: none; background: #eeeef2; border-top: 2px solid #d6d8e4; border-bottom: 2px solid #d6d8e4; border-left: 1px solid #d6d8e4; }
.ribbon button { display: flex; align-items: center; gap: 3px; height: 26px; white-space: nowrap; }
.ribbon button:disabled { color: #9b9b9b; }
.ribbon .col button svg, .icons svg, .snaps svg { width: 20px; height: 20px; }
.grp { display: flex; border-right: 2px solid #d6d8e4; padding-top: 2px; flex: none; }
.col { display: flex; flex-direction: column; align-items: flex-start; }
.ribbon .big { flex-direction: column; height: 84px; gap: 5px; padding-top: 5px; }
.ic36 { width: 36px; height: 36px; }
.big span { line-height: 20px; }
.tri { display: inline-block; width: 0; height: 0; border: 3px solid transparent; border-top: 4px solid #666; border-bottom: 0; margin-left: 2px; }
.tri.lg { border-width: 6px 6px 0; margin: -2px 0 0; }
.g-clip { width: 195px; padding-left: 10px; }
.c-cut { width: 66px; margin-left: 11px; }
.g-sel { width: 149px; padding-left: 7px; }
.line { display: flex; align-items: center; gap: 2px; height: 26px; }
.dd { position: relative; display: block; height: 26px; padding: 1px 0; }
.dd::after { content: ""; position: absolute; right: 5px; top: 11px; border: 3px solid transparent; border-top: 4px solid #666; border-bottom: 0; pointer-events: none; }
.dd select { appearance: none; width: 100%; height: 24px; background: #fff; border: 1px solid #dcdee8; padding-left: 1px; }
.w92 { width: 92px; }
.w80 { width: 80px; }
.w100 { width: 100px; }
.g-eye { width: 68px; padding-left: 7px; }
.icons { display: grid; grid-template-columns: 20px; grid-auto-rows: 26px; align-content: start; }
.icons.two { grid-template-columns: 20px 20px; column-gap: 9px; }
.icons.tight { column-gap: 6px; }
.g-zoom { width: 142px; padding-left: 10px; gap: 9px; }
.g-fit { width: 113px; padding-left: 7px; }
.sub { border-right: 1px solid #a9b0be; padding-left: 7px; height: 78px; margin-top: 4px; }
.sub .icons { margin-top: -4px; }
.sub:last-child { border: 0; }
.s67 { width: 67px; }
.s38 { width: 36px; padding-left: 8px; }
.s34 { width: 34px; }
.s60 { width: 60px; }
.s37 { width: 37px; }
.s35 { width: 35px; padding-left: 8px; }
.s43 { width: 43px; padding-left: 8px; }
.s48 { width: 46px; padding-left: 7px; }
.icons.cs .tri { margin-left: 4px; }
.s43 .tri { margin-left: 0; }
.g-meas { width: 105px; padding-left: 5px; }
.ribbon .pad { padding: 0 4px 0 3px; }
.g-meas .tri { margin-left: 3px; }
.ribbon .on { background: #cbcbcb; }
.g-grid { width: 91px; padding-left: 6px; }
.g-grid .on { padding: 0 4px 0 2px; }
.g-snap { width: 68px; padding-left: 5px; }
.snaps { display: grid; grid-template-columns: 29px 29px; grid-auto-rows: 26px; align-content: start; }
.ribbon .snaps button { justify-content: center; padding-right: 4px; }
.g-mat { width: 111px; padding-left: 6px; }

.tabs { display: flex; align-items: flex-start; height: 25px; flex: none; padding-left: 1px; color: #3c3c3c; }
.tabs button { padding: 0 13px 3px; height: 23px; line-height: 20px; }
.tabs .near { padding: 0 12px 3px 13px; }
.tabs .active { background: #eeeef2; color: #1262a5; border: 1px solid #d0d4e0; border-top: 0; padding: 0 11px 2px; }
.logo { width: 22px; height: 22px; margin-left: auto; margin-right: 4px; }

/* docking area */
.work { flex: 1; min-height: 0; display: flex; }
.left { width: 219px; flex: none; display: flex; flex-direction: column; }
.split { height: 6px; flex: none; background: repeating-conic-gradient(#8e939c 0 25%, #5f6673 0 50%) 0 0 / 4px 4px; }
.split.v { width: 6px; height: auto; }
.phead { display: flex; align-items: center; height: 28px; flex: none; padding: 0 7px 0 3px; gap: 11px; background: linear-gradient(#d6dae0, #bcc1c9); border-bottom: 1px solid #e4e6ea; color: #2c3440; }
.phead h2 { flex: 1; font-size: 14px; }
.phead svg { width: 12px; height: 12px; }
.treebox { flex: 1; min-height: 0; display: flex; position: relative; }
.treeview { position: relative; flex: 1; overflow: hidden; background: #fff; }
.guides { position: absolute; left: 0; top: 0; fill: none; stroke: #8c8c8c; stroke-dasharray: 1 1; }
.tree { position: relative; list-style: none; height: 452px; display: grid; grid-template-rows: repeat(22, 1fr); font-size: 13px; color: #111; }
.tree li { display: flex; align-items: center; white-space: nowrap; }
.tree li > svg { width: 14px; height: 14px; margin: 0 4px; }
.tree i { width: 24px; height: 9px; flex: none; display: flex; justify-content: center; }
.tree i svg { width: 9px; height: 9px; }
.tree .cur { background: #f0f0f0; padding-left: 2px; margin-left: -2px; }
.l0 { padding-left: 18px; }
.l1 { padding-left: 41px; }
.l2 { padding-left: 64px; }
.l3 { padding-left: 87px; }
.l4 { padding-left: 110px; }
.vbar { width: 21px; flex: none; background: #f0f0f0; display: flex; flex-direction: column; align-items: center; padding: 5px 0; }
.vbar svg, .hbar svg, .mscroll svg { width: 12px; height: 12px; }
.vbar .thumb { width: 20px; background: #cdcdcd; height: 323px; }
.treebox .thumb { margin: auto 0 22px; }
.hbar { height: 21px; flex: none; background: #f0f0f0; display: flex; align-items: center; padding: 0 4px; }
.hbar .thumb { width: 76px; height: 20px; background: #cdcdcd; margin: 0 auto 0 6px; }
.left > .hbar { padding-right: 28px; }
.mark { position: absolute; border: 5px solid #ee1c24; }
.mark-tree { left: 39px; top: 352px; width: 177px; height: 42px; }
.props { height: 141px; flex: none; padding: 4px 3px 5px 4px; font: 14px/18px "Liberation Sans", Arial, sans-serif; color: #222; }
.propframe { height: 117px; border-right: 2px solid #808080; border-bottom: 2px solid #808080; border-top: 1px solid #fff; border-left: 1px solid #fff; padding: 3px 3px 0 2px; }
.proprow { display: flex; height: 89px; border-top: 2px solid #777; border-left: 2px solid #777; }
.propclip { flex: 1; overflow: hidden; background: #fff; }
.ptable { border-collapse: collapse; table-layout: fixed; width: 190px; }
.ptable th { height: 22px; font-weight: normal; background: #f0f0f0; border-right: 2px solid #888; border-bottom: 2px solid #888; padding: 0; white-space: nowrap; }
.ptable td { height: 23px; padding: 0 2px 0 1px; border-right: 1px solid #c0c0c0; border-bottom: 1px solid #c0c0c0; white-space: nowrap; }
.ptable .p1 { width: 62px; }
.ptable .p2 { width: 29px; }
.ptable .p3 { width: 38px; }
.ptable .ck { padding: 0 5px; }
.ck input { appearance: none; display: block; width: 17px; height: 17px; background: #fff; border: 2px solid #777; border-right: 1px solid #ddd; border-bottom: 1px solid #ddd; }
.ck input:checked { display: grid; place-items: center; }
.ck input:checked::before { content: ""; width: 9px; height: 5px; border-left: 3px solid #000; border-bottom: 3px solid #000; transform: rotate(-45deg); margin-top: -3px; }
.props .thumb { height: 28px; margin: 5px 0 auto; }
.props .hbar { border-left: 1px solid #999; height: 21px; padding-right: 28px; }
.props .hbar .thumb { width: 118px; height: 20px; margin: 0 auto 0 6px; }
.ptab { display: block; height: 16px; line-height: 14px; padding: 0 7px 1px 6px; font-size: 13px; border-right: 2px solid #888; border-bottom: 1px solid #888; background: #f0f0f0; }

.right { flex: 1; min-width: 0; display: flex; flex-direction: column; }
.upper { flex: 1; min-height: 0; display: flex; }
.mtree { width: 45px; flex: none; background: #fff; display: flex; flex-direction: column; border-top: 2px solid #666; border-left: 1px solid #999; }
.mtree ul { list-style: none; flex: 1; }
.mtree li { height: 24px; display: flex; align-items: center; gap: 3px; padding-left: 3px; }
.mtree li svg { width: 14px; height: 14px; margin-left: 8px; }
.mtree li .pm { width: 9px; height: 9px; margin: 0; }
.mtree li span { width: 2px; height: 11px; background: #a8714a; margin-left: 2px; }
.mscroll { display: flex; justify-content: space-around; align-items: center; height: 24px; background: #f0f0f0; padding-bottom: 3px; }
.canvas { flex: 1; min-width: 0; background: #fff; margin-left: 5px; border-left: 1px solid #808080; border-top: 2px solid #777; }
.model { width: 100%; height: 100%; }
.rpanel { width: 140px; flex: none; display: flex; flex-direction: column; }
.rbody { flex: 1; padding: 4px 3px 20px; }
.rframe { height: 100%; border-right: 2px solid #888; border-bottom: 2px solid #888; border-top: 1px solid #fff; display: flex; flex-direction: column; justify-content: space-between; align-items: flex-end; padding: 22px 6px 6px; font: 14px/20px "Liberation Sans", Arial, sans-serif; }
.rframe svg { width: 12px; height: 12px; }
.lower { display: flex; height: 135px; flex: none; }
.msg, .prog { background: #fff; }
.msg { width: 623px; flex: none; }
.prog { flex: 1; }

.status { display: flex; align-items: center; gap: 3px; height: 29px; flex: none; padding: 1px 1px 0 3px; background: #cdd4dc; border-top: 1px solid #e0e4e8; border-bottom: 1px solid #b6bcc2; }
.status span { flex: 1; color: #222; }
.status button { display: flex; align-items: center; gap: 8px; height: 25px; width: 143px; padding: 0 5px; border: 1px solid #3c7fb8; background: #cce4f8; color: #111; white-space: nowrap; }
.status button + button { width: 128px; gap: 10px; }
.status svg { width: 12px; height: 12px; }

/* sweep dialog */
.dialog { position: absolute; left: 789px; top: 174px; width: 832px; height: 623px; display: flex; flex-direction: column; background: #f0f0f0; border: 1px solid #7c7c7c; border-top: 2px solid #8c8c8c; box-shadow: 0 6px 16px rgba(0, 0, 0, .35); color: #1a1a1a; font: 14px/20px "Liberation Sans", Arial, sans-serif; }
.dialog header { display: flex; align-items: center; justify-content: space-between; height: 36px; flex: none; background: #fff; padding: 0 13px 2px 8px; }
.dialog header h2 { font: 15px/34px "Open Sans", sans-serif; }
.dialog header svg { width: 14px; height: 14px; fill: none; stroke: #333; }
.dtabs { display: flex; align-items: flex-end; height: 32px; flex: none; padding-left: 8px; }
.dtabs button { height: 21px; text-align: center; border-right: 2px solid #808080; white-space: nowrap; }
.dtabs .act { width: 122px; height: 24px; padding-bottom: 3px; }
.dtabs .t2 { width: 44px; }
.dtabs .t3 { width: 59px; }
.dtabs .t4 { width: 84px; }
.dtabs .t5 { width: 58px; }
.dpanel { flex: 1; margin: 0 7px 0 7px; border: 1px solid #fff; border-right: 2px solid #808080; border-bottom: 2px solid #808080; padding: 17px 15px 16px 16px; display: flex; flex-direction: column; }
.drow { display: flex; gap: 16px; padding-left: 1px; }
.grid1 { position: relative; flex: 1; height: 186px; background: #fff; border: 1px solid #fafafa; border-left: 2px solid #808080; border-top: 2px solid #808080; padding-right: 3px; }
.grid1::before { content: ""; position: absolute; right: 0; top: 0; width: 3px; height: 22px; background: #f0f0f0; border-bottom: 2px solid #808080; }
.side { width: 123px; flex: none; display: flex; flex-direction: column; gap: 12px; padding-right: 11px; margin-top: -2px; }
.dialog .b3 { height: 29px; border: 1px solid #fff; border-right: 2px solid #808080; border-bottom: 2px solid #808080; text-align: center; }
.side .b3, .syncs .b3, .sans { font-family: "Open Sans", "Noto Sans", sans-serif; font-size: 13px; }
.dialog .b3:disabled { color: #a8a8a8; }
.dtable { width: 100%; border-collapse: collapse; table-layout: fixed; }
.dtable th { height: 22px; padding: 0; font-weight: normal; line-height: 18px; background: #f0f0f0; border-right: 2px solid #808080; border-bottom: 2px solid #808080; white-space: nowrap; }
.dtable td { height: 22px; padding: 0 2px 0 1px; line-height: 18px; border-right: 1px solid #c0c0c0; border-bottom: 1px solid #c0c0c0; white-space: nowrap; }
.d1 { width: 51px; }
.d2 { width: 57px; }
.d3 { width: 68px; }
.mark-dlg { left: -10px; top: -8px; width: 541px; height: 66px; }
.syncs { display: flex; justify-content: flex-end; gap: 15px; padding: 18px 137px 19px 0; }
.syncs .b3 { width: 108px; }
.grid2 { flex: 1; background: #fff; border: 1px solid #808080; border-bottom-width: 2px; border-top-width: 2px; padding-right: 2px; }
.dfoot { display: flex; gap: 5px; padding: 9px 6px 8px 6px; align-items: center; }
.ev { width: 105px; }
.hpc { width: 179px; }
.ev .tri { border: 4px solid transparent; border-top: 5px solid #111; border-bottom: 0; margin: 0 0 4px 3px; }
.ok { width: 97px; margin-left: auto; margin-right: 3px; }
.dialog .ok { border: 1px solid #555; border-right-width: 2px; border-bottom-width: 3px; }
.no { width: 97px; }
```
